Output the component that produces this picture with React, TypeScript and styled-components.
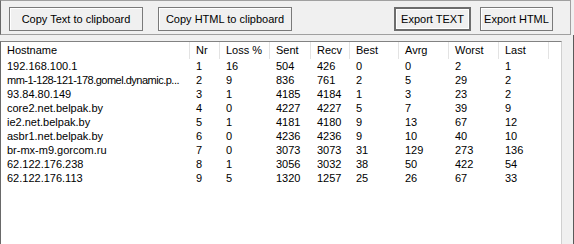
import React from "react";
import styled, { createGlobalStyle } from "styled-components";

const GlobalStyle = createGlobalStyle`
  html, body { margin: 0; padding: 0; background: #f0f0f0; }
  body {
    font-family: "Liberation Sans", Arial, sans-serif;
    font-size: 11px;
    color: #000;
  }
  * { box-sizing: border-box; }
`;

const Window = styled.div`
  width: 574px;
  height: 244px;
  display: flex;
  flex-direction: column;
  overflow: hidden;
  background: #f0f0f0;
`;

const Toolbar = styled.div`
  width: 571px;
  height: 35px;
  flex: none;
  display: flex;
  align-items: flex-start;
  padding: 6px 0 0 8px;
  border-top: 1px solid #a0a0a0;
  border-left: 1px solid #696969;
  border-right: 1px solid #a0a0a0;
  border-bottom: 1px solid #a0a0a0;
`;

const Spacer = styled.div`
  flex: 1;
`;

const Button = styled.button<{ $w: number; $gap?: number; $default?: boolean }>`
  width: ${(p) => p.$w}px;
  height: 24px;
  margin-right: ${(p) => p.$gap ?? 0}px;
  padding: 0;
  font-family: "Liberation Sans", Arial, sans-serif;
  font-size: 11px;
  color: #000;
  background: #f0f0f0;
  border: ${(p) => (p.$default ? "2px solid #6d6d6d" : "1px solid #7a7a7a")};
  box-shadow: ${(p) => (p.$default ? "inset 0 0 0 1px #ffffff" : "inset 1px 1px 0 #ffffff")};
  cursor: default;
`;

const Body = styled.div`
  flex: 1;
  display: flex;
  padding-top: 6px;
  border-right: 1px solid #5a5a5a;
  min-height: 0;
`;

const List = styled.div`
  width: 562px;
  background: #fff;
  border-top: 1px solid #828282;
  border-left: 1px solid #696969;
  border-right: 1px solid #d0d0d0;
`;

const Grid = styled.div`
  display: grid;
  grid-template-columns: 189px 30px 50px 41px 39px 49px 50px 50px 50px 1fr;
`;

const Header = styled(Grid)`
  height: 17px;
`;

const HeadCell = styled.div<{ $last?: boolean }>`
  border-right: ${(p) => (p.$last ? "none" : "1px solid #e3e3e3")};
  padding-left: 6px;
  line-height: 17px;
  white-space: nowrap;
  overflow: hidden;
`;

const Row = styled(Grid)`
  height: 14px;
  line-height: 14px;
`;

const Cell = styled.div<{ $tight?: boolean }>`
  padding-left: 6px;
  white-space: nowrap;
  overflow: hidden;
  letter-spacing: ${(p) => (p.$tight ? "-0.5px" : "normal")};
`;

const RightStrip = styled.div`
  flex: 1;
`;

const columns = ["Hostname", "Nr", "Loss %", "Sent", "Recv", "Best", "Avrg", "Worst", "Last"];

const rows: (string | number)[][] = [
  ["192.168.100.1", 1, 16, 504, 426, 0, 0, 2, 1],
  ["mm-1-128-121-178.gomel.dynamic.p...", 2, 9, 836, 761, 2, 5, 29, 2],
  ["93.84.80.149", 3, 1, 4185, 4184, 1, 3, 23, 2],
  ["core2.net.belpak.by", 4, 0, 4227, 4227, 5, 7, 39, 9],
  ["ie2.net.belpak.by", 5, 1, 4181, 4180, 9, 13, 67, 12],
  ["asbr1.net.belpak.by", 6, 0, 4236, 4236, 9, 10, 40, 10],
  ["br-mx-m9.gorcom.ru", 7, 0, 3073, 3073, 31, 129, 273, 136],
  ["62.122.176.238", 8, 1, 3056, 3032, 38, 50, 422, 54],
  ["62.122.176.113", 9, 5, 1320, 1257, 25, 26, 67, 33],
];

export default function App() {
  return (
    <>
      <GlobalStyle />
      <Window>
        <Toolbar>
          <Button $w={134} $gap={15}>Copy Text to clipboard</Button>
          <Button $w={134}>Copy HTML to clipboard</Button>
          <Spacer />
          <Button $w={77} $gap={9} $default>Export TEXT</Button>
          <Button $w={73} $gap={17}>Export HTML</Button>
        </Toolbar>
        <Body>
          <List>
            <Header>
              {columns.map((c) => (
                <HeadCell key={c}>{c}</HeadCell>
              ))}
              <HeadCell $last />
            </Header>
            {rows.map((r, i) => (
              <Row key={i}>
                {r.map((v, j) => (
                  <Cell key={j} $tight={j === 0 && String(v).length > 30}>
                    {v}
                  </Cell>
                ))}
                <Cell />
              </Row>
            ))}
          </List>
          <RightStrip />
        </Body>
      </Window>
    </>
  );
}
